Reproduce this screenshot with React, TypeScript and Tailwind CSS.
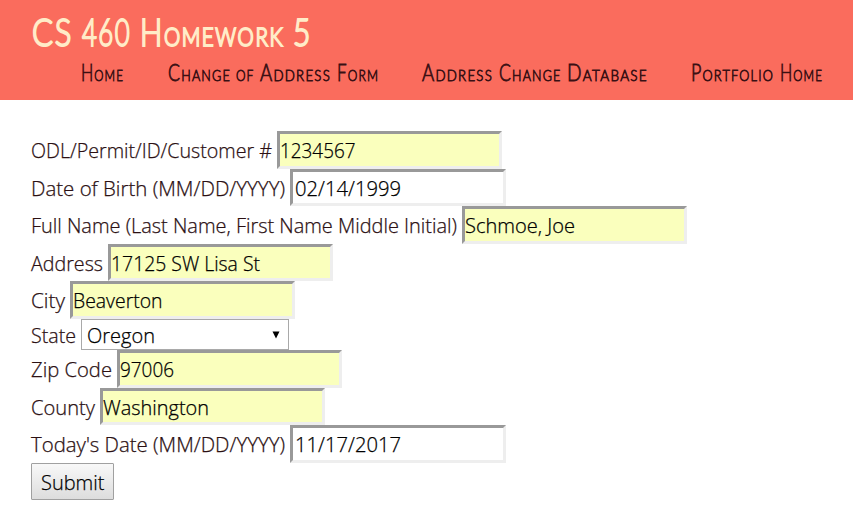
import { useLayoutEffect, useRef, useState } from 'react';

type FitProps = { text: string; width: number; className?: string };

/** Single line of text condensed or widened to fill a given width. */
function Fit({ text, width, className = '' }: FitProps) {
  const ref = useRef<HTMLSpanElement>(null);
  const [scale, setScale] = useState(1);
  useLayoutEffect(() => {
    const measure = () => {
      if (ref.current && ref.current.offsetWidth) {
        setScale(width / parseFloat(getComputedStyle(ref.current).width));
      }
    };
    measure();
    document.fonts.ready.then(measure);
  }, [width, text]);
  return (
    <span className={`block shrink-0 whitespace-nowrap ${className}`} style={{ width }}>
      <span ref={ref} className="inline-block origin-left" style={{ transform: `scaleX(${scale})` }}>
        {text}
      </span>
    </span>
  );
}

type Word = { text: string; width: number };

type Field = {
  label: string;
  labelWidth: number;
  value: string;
  valueWidth: number;
  row: string;
  box: string;
};

const filled = 'w-[225px] bg-[#faffbd]';
const plain = 'w-[216px] bg-white pl-[1.5px]';

const before: Field[] = [
  { label: 'ODL/Permit/ID/Customer #', labelWidth: 241, value: '1234567', valueWidth: 75.5, row: 'h-[38px]', box: filled },
  { label: 'Date of Birth (MM/DD/YYYY)', labelWidth: 254, value: '02/14/1999', valueWidth: 106, row: 'h-[37px]', box: plain },
  { label: 'Full Name (Last Name, First Name Middle Initial)', labelWidth: 426, value: 'Schmoe, Joe', valueWidth: 110, row: 'h-[38px]', box: filled },
  { label: 'Address', labelWidth: 72, value: '17125 SW Lisa St', valueWidth: 149, row: 'h-[37px]', box: filled },
  { label: 'City', labelWidth: 34, value: 'Beaverton', valueWidth: 89.5, row: 'h-[38px]', box: filled },
];

const after: Field[] = [
  { label: 'Zip Code', labelWidth: 81, value: '97006', valueWidth: 54, row: 'h-[38px]', box: filled },
  { label: 'County', labelWidth: 64, value: 'Washington', valueWidth: 106, row: 'h-[37px]', box: filled },
  { label: "Today's Date (MM/DD/YYYY)", labelWidth: 254, value: '11/17/2017', valueWidth: 106, row: 'h-[38px]', box: plain },
];

function Row({ field }: { field: Field }) {
  return (
    <div className={`flex items-stretch gap-[5px] ${field.row}`}>
      <Fit text={field.label} width={field.labelWidth} className="pt-[6px]" />
      <div
        className={`border-[3px] border-t-[#999] border-l-[#999] border-r-[#eee] border-b-[#eee] pt-[3px] text-black ${field.box}`}
      >
        <Fit text={field.value} width={field.valueWidth} />
      </div>
    </div>
  );
}

const title: Word[] = [
  { text: 'CS', width: 41 },
  { text: '460', width: 49 },
  { text: 'Homework', width: 144 },
  { text: '5', width: 19 },
];

const links: Word[][] = [
  [{ text: 'Home', width: 43 }],
  [
    { text: 'Change', width: 63 },
    { text: 'of', width: 18.5 },
    { text: 'Address', width: 71 },
    { text: 'Form', width: 42 },
  ],
  [
    { text: 'Address', width: 71 },
    { text: 'Change', width: 62.5 },
    { text: 'Database', width: 81 },
  ],
  [
    { text: 'Portfolio', width: 83 },
    { text: 'Home', width: 43 },
  ],
];

export default function App() {
  return (
    <div className="h-[509px] w-[853px] overflow-hidden bg-white font-['Open_Sans',sans-serif] text-[19.6px] leading-[27px] font-light text-[#2b1013] [-webkit-text-stroke:0.25px_currentColor]">
      <header className="h-[100px] bg-[#fa6c5d] pt-[10px] pl-[31px] font-['Lato',sans-serif] font-light [font-variant-caps:small-caps] [stroke-linejoin:round]">
        <h1 className="flex gap-[9px] pl-[0.5px] text-[37.5px] leading-[44px] tracking-[2px] text-[#ffecc8] [-webkit-text-stroke:2px_#ffecc8]">
          {title.map((word) => (
            <Fit key={word.text} text={word.text} width={word.width} />
          ))}
        </h1>
        <nav className="flex gap-[43.5px] pt-[5px] pl-[50px] text-[22.5px] leading-[28px] tracking-[1.5px] text-[#3a1014] [-webkit-text-stroke:0.8px_#3a1014]">
          {links.map((words, i) => (
            <a key={i} className="flex gap-[5.5px]">
              {words.map((word) => (
                <Fit key={word.text} text={word.text} width={word.width} />
              ))}
            </a>
          ))}
        </nav>
      </header>
      <main className="flex flex-col items-start pt-[31px] pl-[31px]">
        {before.map((field) => (
          <Row key={field.label} field={field} />
        ))}
        <div className="flex h-[31px] gap-[5px]">
          <Fit text="State" width={45} className="pt-[3px]" />
          <div className="flex w-[208px] justify-between border border-[#a9a9a9] bg-white pt-[2px] pr-[8px] pl-[5px] text-black">
            <Fit text="Oregon" width={68} />
            <svg className="mt-[9px] h-[8px] w-[8px]" viewBox="0 0 8 8">
              <path d="M0.5 0.5h7L4 7.5z" fill="#000" />
            </svg>
          </div>
        </div>
        {after.map((field) => (
          <Row key={field.label} field={field} />
        ))}
        <button className="flex h-[37px] w-[83px] rounded-[1px] border border-[#a0a0a0] bg-linear-to-b from-[#f8f8f8] to-[#dddddd] pt-[5px] pl-[9px] text-black">
          <Fit text="Submit" width={63.5} className="text-left" />
        </button>
      </main>
    </div>
  );
}
